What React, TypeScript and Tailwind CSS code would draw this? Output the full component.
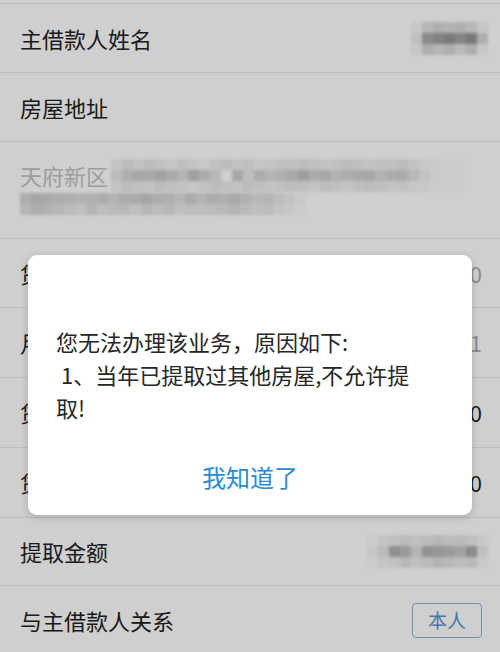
const font = { fontFamily: '"Noto Sans CJK SC", "Noto Sans", sans-serif' };

type MosaicProps = {
  rows: number[][];
  cell: number;
  className?: string;
};

// pixelated privacy blur over a value
function Mosaic({ rows, cell, className }: MosaicProps) {
  return (
    <div className={"flex flex-col blur-[1.5px] " + (className ?? "")}>
      {rows.map((r, i) => (
        <div key={i} className="flex">
          {r.map((shade, j) => (
            <div
              key={j}
              style={{
                width: cell,
                height: cell,
                background: `rgb(${shade},${shade},${shade})`,
              }}
            />
          ))}
        </div>
      ))}
    </div>
  );
}

function Row({
  label,
  right,
  h = "h-[69px]",
}: {
  label: string;
  right?: React.ReactNode;
  h?: string;
}) {
  return (
    <div
      className={
        "flex items-center justify-between border-b border-[#ebebeb] pl-5 pr-[18px] " +
        h
      }
    >
      <span className="text-[22px] text-[#222]">{label}</span>
      {right}
    </div>
  );
}

export default function App() {
  return (
    <div
      className="relative h-[652px] w-[500px] overflow-hidden bg-white"
      style={font}
    >
      {/* Form rows */}
      <div className="h-[4px] border-b border-[#ebebeb]" />
      <Row
        label="主借款人姓名"
        right={
          <Mosaic
            cell={11}
            className="mr-[-6px]"
            rows={[
              [245, 225, 215, 220, 215, 225, 245],
              [235, 170, 160, 150, 165, 150, 215],
              [245, 215, 225, 215, 230, 215, 245],
            ]}
          />
        }
      />
      <Row label="房屋地址" />
      {/* Address */}
      <div className="h-[97px] border-b border-[#ebebeb] pl-5 pt-[15px]">
        <div className="flex items-center">
          <span className="text-[22px] leading-[36px] text-[#c2c2c2]">
            天府新区
          </span>
          <Mosaic
            cell={11}
            className="ml-[3px]"
            rows={[
              [242, 232, 240, 232, 238, 244, 236, 240, 246, 238, 232, 240, 236, 244, 240, 238, 236, 232, 236, 240, 238, 232, 236, 240, 236, 238, 232, 240, 246, 248, 252, 252],
              [232, 214, 206, 208, 200, 210, 222, 196, 212, 226, 255, 206, 234, 212, 222, 216, 208, 196, 212, 206, 220, 214, 210, 206, 220, 212, 210, 226, 240, 248, 252, 252],
              [240, 232, 236, 240, 232, 236, 240, 244, 238, 232, 236, 240, 232, 236, 240, 238, 232, 236, 240, 232, 236, 240, 236, 232, 236, 240, 238, 244, 246, 250, 252, 252],
            ]}
          />
        </div>
        <Mosaic
          cell={11}
          rows={[
            [214, 206, 210, 214, 216, 220, 218, 214, 222, 212, 210, 204, 214, 216, 224, 210, 222, 212, 216, 208, 218, 226, 222, 232, 240, 248],
            [222, 214, 218, 226, 232, 236, 222, 234, 230, 228, 236, 224, 232, 226, 236, 232, 234, 232, 228, 222, 230, 236, 232, 240, 246, 250],
          ]}
        />
      </div>
      <Row
        label="贷款金额"
        right={<span className="text-[22px] text-[#aaa]">0</span>}
      />
      <Row
        label="月还款额"
        h="h-[70px]"
        right={<span className="text-[22px] text-[#aaa]">1</span>}
      />
      <Row
        label="贷款余额"
        h="h-[70px]"
        right={<span className="text-[22px] text-[#222]">0</span>}
      />
      <Row
        label="贷款期限"
        h="h-[70px]"
        right={<span className="text-[22px] text-[#222]">0</span>}
      />
      <Row
        label="提取金额"
        h="h-[68px]"
        right={
          <Mosaic
            cell={11}
            className="mr-[-6px]"
            rows={[
              [250, 240, 238, 230, 236, 232, 226, 232, 230, 236, 246],
              [244, 230, 176, 190, 222, 180, 186, 190, 200, 170, 236],
              [250, 242, 238, 226, 236, 230, 222, 226, 232, 228, 248],
            ]}
          />
        }
      />
      <Row
        label="与主借款人关系"
        h="h-[70px]"
        right={
          <button className="flex h-[35px] w-[70px] items-center justify-center rounded-[4px] border border-[#8fb6dc] text-[19px] text-[#5394d2]">
            本人
          </button>
        }
      />

      {/* Dim overlay */}
      <div className="absolute inset-0 bg-black/[0.19]" />

      {/* Dialog */}
      <div className="absolute left-[28px] top-[255px] h-[260px] w-[444px] rounded-[9px] bg-white shadow-[0_2px_8px_rgba(0,0,0,0.18)]">
        <div className="px-7 pt-[70px] text-[22px] leading-[33px] text-[#262626]">
          <p>您无法办理该业务，原因如下:</p>
          <p className="whitespace-pre"> 1、当年已提取过其他房屋,不允许提</p>
          <p>取!</p>
        </div>
        <div className="mt-[16px] flex h-[74px] items-center justify-center">
          <span className="text-[24px] text-[#2a8bd2]">我知道了</span>
        </div>
      </div>
    </div>
  );
}
